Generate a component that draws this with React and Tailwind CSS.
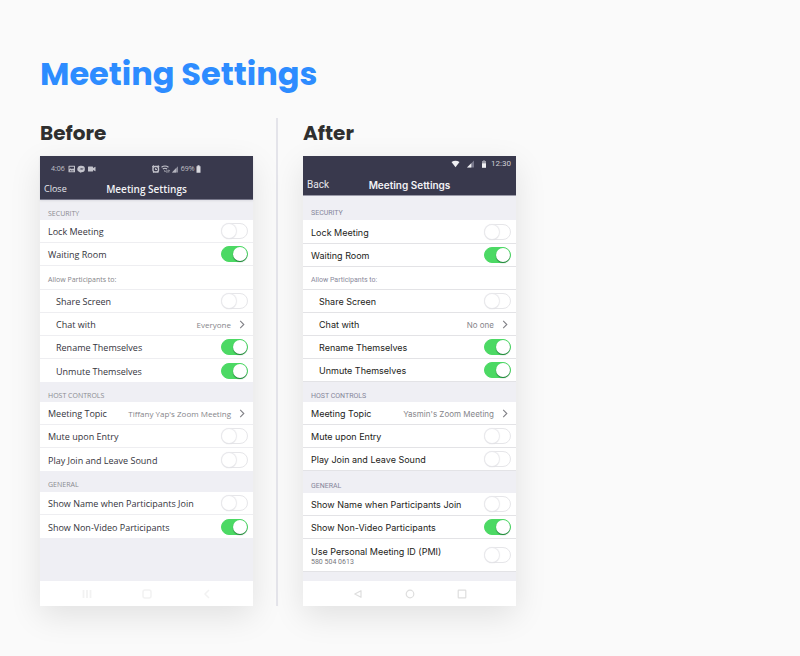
import React from "react";

const beforeSections = [
  {
    title: "Security",
    head: "h-[20px] pt-[7px]",
    rows: [
      { type: "toggle", label: "Lock Meeting", on: false },
      { type: "toggle", label: "Waiting Room", on: true },
      { type: "note", label: "Allow Participants to:", size: "h-[24px] pt-1" },
      { type: "toggle", label: "Share Screen", on: false, nested: true },
      { type: "link", label: "Chat with", value: "Everyone", nested: true },
      { type: "toggle", label: "Rename Themselves", on: true, nested: true },
      { type: "toggle", label: "Unmute Themselves", on: true, nested: true },
    ],
  },
  {
    title: "Host controls",
    head: "h-[20px] pt-[7px]",
    rows: [
      { type: "link", label: "Meeting Topic", value: "Tiffany Yap's Zoom Meeting" },
      { type: "toggle", label: "Mute upon Entry", on: false },
      { type: "toggle", label: "Play Join and Leave Sound", on: false },
    ],
  },
  {
    title: "General",
    head: "h-[21px] pt-[7px]",
    rows: [
      { type: "toggle", label: "Show Name when Participants Join", on: false },
      { type: "toggle", label: "Show Non-Video Participants", on: true },
    ],
  },
];

const afterSections = [
  {
    title: "Security",
    head: "h-[24px] pt-[10px]",
    rows: [
      { type: "toggle", label: "Lock Meeting", on: false, size: "h-[24px]" },
      { type: "toggle", label: "Waiting Room", on: true },
      { type: "note", label: "Allow Participants to:", size: "h-[23px] pt-1" },
      { type: "toggle", label: "Share Screen", on: false, nested: true },
      { type: "link", label: "Chat with", value: "No one", nested: true },
      { type: "toggle", label: "Rename Themselves", on: true, nested: true },
      { type: "toggle", label: "Unmute Themselves", on: true, nested: true },
    ],
  },
  {
    title: "Host controls",
    head: "h-[20px] pt-[7px]",
    rows: [
      { type: "link", label: "Meeting Topic", value: "Yasmin's Zoom Meeting" },
      { type: "toggle", label: "Mute upon Entry", on: false },
      { type: "toggle", label: "Play Join and Leave Sound", on: false },
    ],
  },
  {
    title: "General",
    head: "h-[22px] pt-[7px]",
    rows: [
      { type: "toggle", label: "Show Name when Participants Join", on: false },
      { type: "toggle", label: "Show Non-Video Participants", on: true },
      { type: "toggle", label: "Use Personal Meeting ID (PMI)", detail: "580 504 0613", on: false, size: "h-[33px]" },
    ],
  },
];

const beforeTheme = {
  id: "before",
  text: "text-[9px] text-[#34343c]",
  line: "border-[#eeeef1]",
  value: "text-[8px] text-[#85858a]",
  muted: "text-[#8a8a90]",
  note: "text-[#85858a]",
};

const afterTheme = {
  id: "after",
  text: "font-[Inter,Roboto,sans-serif] text-[9px] text-[#1c1c20]",
  line: "border-[#e3e3e6]",
  value: "text-[8px] text-[#85858a]",
  muted: "text-[#85859a]",
  note: "text-[#8a8a9c]",
};

function Toggle({ id, on }) {
  return (
    <input
      id={id}
      type="checkbox"
      role="switch"
      defaultChecked={on}
      className="flex h-[16px] w-[27px] shrink-0 appearance-none items-center rounded-full border border-[#e6e6e9] bg-white before:block before:h-[14px] before:w-[14px] before:rounded-full before:bg-white before:shadow-[0_0_1px_1px_#e9e9ec,0_1px_1px_#cfcfd4] before:content-[''] checked:justify-end checked:border-[#4cd964] checked:bg-[#4cd964] checked:before:shadow-[0_1px_1px_#1f7a38]"
    />
  );
}

function Row({ row, theme, last }) {
  const indent = row.nested ? "pl-4" : "pl-2";
  const border = last ? "" : `border-b ${theme.line}`;
  if (row.type === "note") {
    return (
      <p className={`flex items-center bg-white pl-2 text-[7px] leading-[10px] ${row.size} ${border} ${theme.note}`}>
        {row.label}
      </p>
    );
  }
  if (row.type === "link") {
    return (
      <button
        type="button"
        className={`flex h-[23px] w-full items-center bg-white pr-2 text-left leading-[12px] ${indent} ${border} ${theme.text}`}
      >
        <span className="flex-1 pt-[2px]">{row.label}</span>
        <span className={`mr-2 pt-[2px] ${theme.value}`}>{row.value}</span>
        <svg viewBox="0 0 6 10" className="h-[9px] w-[6px]" fill="none" stroke="#808086" strokeWidth="1.2">
          <path d="M1 1l4 4-4 4" />
        </svg>
      </button>
    );
  }
  const id = `${theme.id}-${row.label.toLowerCase().replace(/[^a-z]+/g, "-")}`;
  return (
    <div className={`flex items-center justify-between bg-white pr-[5px] leading-[12px] ${row.size || "h-[23px]"} ${indent} ${border} ${theme.text}`}>
      <label htmlFor={id} className="pt-[2px]">
        {row.label}
        {row.detail && <span className="block font-[Roboto,sans-serif] text-[7px] leading-[9px] text-[#77777d]">{row.detail}</span>}
      </label>
      <Toggle id={id} on={row.on} />
    </div>
  );
}

function Sections({ sections, theme }) {
  return sections.map((s) => (
    <section key={s.title}>
      <h3 className={`flex items-center pl-2 text-[7px] leading-[10px] uppercase ${s.head} ${theme.muted}`}>{s.title}</h3>
      {s.rows.map((row, i) => (
        <Row key={row.label} row={row} theme={theme} last={i === s.rows.length - 1 && theme.id === "before"} />
      ))}
    </section>
  ));
}

function TitleBar({ action, size, heading }) {
  return (
    <div className={`grid h-[20px] grid-cols-[1fr_auto_1fr] items-center px-1 leading-[14px] ${size}`}>
      <button type="button" className="justify-self-start text-[#e6e6ec]">
        {action}
      </button>
      <h2 className={`text-[10px] text-[#f2f2f5] ${heading}`}>Meeting Settings</h2>
    </div>
  );
}

function BeforePhone() {
  return (
    <div className="flex flex-1 flex-col bg-[#efeff4] font-['Open_Sans',sans-serif] shadow-[0_10px_30px_rgba(0,0,0,0.1)]">
      <header className="border-b border-[#77778a] bg-[#39394d] shadow-[0_1px_2px_#dcdce2]">
        <div className="flex h-[23px] items-center pt-[3px] pl-[11px] text-[7px] leading-[10px] text-[#c4c4cc]">
          <span>4:06</span>
          <svg viewBox="0 0 28 8" className="ml-[3px] h-[8px] w-[28px]" fill="#c4c4cc">
            <path fillRule="evenodd" d="M1 .8h5.500q.5 0 .5.5v5.400q0 .5-.5.5H1q-.5 0-.5-.5V1.300q0-.5.5-.5zM1.500 1.800v2.400l1.300-1 1.200 1 1-1 1 .8V1.800zM1.500 6.200h4.300L5 5.100l-1 .9-1.300-1z" />
            <path fillRule="evenodd" d="M13.500 .8a3.400 3.200 0 0 1 0 6.400l-1 .6-1-.9A3.400 3.200 0 0 1 13.500 .8zM11.500 4.900l1.500-.8 1 .8 1.700-1.800-1.700.7-1-.7z" />
            <path d="M20.500 1.600h4q.5 0 .5.500v.9l2.500-1.300v4.600l-2.500-1.300v.9q0 .5-.5.5h-4q-.5 0-.5-.5V2.100q0-.5.5-.5z" />
          </svg>
          <svg viewBox="0 0 28 8" className="ml-[56px] h-[8px] w-[28px]" fill="none" stroke="#c4c4cc">
            <rect x="1" y="1.500" width="5.500" height="5.500" rx="2" strokeWidth="1.400" />
            <path d="M.3 2L1.800.5M7.200 2L5.700.5M3.700 3v1.500h1.300M1.200 7.600l.7-.9M6.300 7.600l-.7-.9" strokeWidth="1.100" />
            <path d="M9.500 2.300q3.500-2.600 7 0M10.800 4q2.200-1.600 4.200 0M12.200 5.600l1.300.9" strokeWidth="1.100" />
            <path d="M15 4.800v2.700M14.200 6.700l.8.9M16.800 7.500V4.800M17.600 5.800l-.8-.9" strokeWidth=".7" />
            <path d="M26 1.200v6.300h-6z" fill="#8d8d9b" stroke="none" />
            <path d="M24 3.300v4.200h-4z" fill="#b4b4be" stroke="none" />
          </svg>
          <span className="mx-px">69%</span>
          <svg viewBox="0 0 5 8" className="h-[8px] w-[5px]" fill="#d8d8de">
            <path d="M1.500.3h2v1h1v6.400h-4V1.300h1z" />
          </svg>
        </div>
        <TitleBar action="Close" size="text-[9px]" heading="font-semibold" />
      </header>
      <Sections sections={beforeSections} theme={beforeTheme} />
      <nav className="mt-auto flex h-[25px] items-center justify-center gap-[50px] bg-white text-[#f2f2f2]">
        <button type="button" aria-label="Recent apps">
          <svg viewBox="0 0 10 10" className="h-[10px] w-[10px]" fill="none" stroke="currentColor" strokeWidth="1.800">
            <path d="M1.500 1v8M5 1v8M8.500 1v8" />
          </svg>
        </button>
        <button type="button" aria-label="Home">
          <svg viewBox="0 0 10 10" className="h-[10px] w-[10px]" fill="none" stroke="currentColor" strokeWidth="1.500">
            <rect x="1" y="1" width="8" height="8" rx="2" />
          </svg>
        </button>
        <button type="button" aria-label="Go back">
          <svg viewBox="0 0 10 10" className="h-[10px] w-[10px]" fill="none" stroke="currentColor" strokeWidth="1.500">
            <path d="M7 1L3 5l4 4" />
          </svg>
        </button>
      </nav>
    </div>
  );
}

function AfterPhone() {
  return (
    <div className="flex flex-1 flex-col bg-[#efeff4] font-[Roboto,sans-serif] shadow-[0_10px_30px_rgba(0,0,0,0.1)]">
      <header className="border-b border-[#9a9aa8] bg-[#39394d]">
        <div className="flex h-[19px] items-center justify-end pr-[5px] pb-[3px] text-[8px] leading-[10px] text-[#d0d0d6]">
          <svg viewBox="0 0 36 8" className="mr-1 h-[8px] w-[36px]" fill="#efeff2">
            <path d="M.5 2q4-2.500 8 0l-4 5.300z" />
            <path d="M23 .6v6.800h-7z" fill="#77778a" />
            <path d="M20.300 3.200v4.200H16z" />
            <path d="M31 1h1.200V.2h1.600V1H35v2.200h-4z" fill="#9a9aa6" />
            <path d="M31 3.200h4v4.600h-4z" />
          </svg>
          <span>12:30</span>
        </div>
        <TitleBar action="Back" size="text-[10px]" heading="font-[Inter,Roboto,sans-serif] font-semibold" />
      </header>
      <Sections sections={afterSections} theme={afterTheme} />
      <nav className="mt-[9px] flex h-[25px] items-center justify-center gap-[42px] bg-white text-[#dedede]">
        <button type="button" aria-label="Go back">
          <svg viewBox="0 0 10 10" className="h-[10px] w-[10px]" fill="none" stroke="currentColor" strokeWidth="1.200" strokeLinejoin="round">
            <path d="M8 1.700v6.600L1.800 5z" />
          </svg>
        </button>
        <button type="button" aria-label="Home">
          <svg viewBox="0 0 10 10" className="h-[10px] w-[10px]" fill="none" stroke="currentColor" strokeWidth="1.200">
            <circle cx="5" cy="5" r="3.800" />
          </svg>
        </button>
        <button type="button" aria-label="Recent apps">
          <svg viewBox="0 0 10 10" className="h-[10px] w-[10px]" fill="none" stroke="currentColor" strokeWidth="1.200">
            <rect x="1.200" y="1.200" width="7.600" height="7.600" rx=".6" />
          </svg>
        </button>
      </nav>
    </div>
  );
}

function Column({ title, children }) {
  return (
    <section className="flex w-[213px] flex-col">
      <h2 className="mb-2 font-[Poppins,Inter,sans-serif] text-[20px] leading-[30px] font-bold text-[#2f2f2f]">{title}</h2>
      {children}
    </section>
  );
}

export default function App() {
  return (
    <main className="min-h-screen bg-[#fafafa] px-10 pt-[50px] pb-[50px]">
      <h1 className="mb-5 font-[Poppins,Inter,sans-serif] text-[32px] leading-[48px] font-bold text-[#2d8cff]">Meeting Settings</h1>
      <div className="flex">
        <Column title="Before">
          <BeforePhone />
        </Column>
        <div className="mr-[25px] ml-[23px] w-[2px] bg-[#e4e4ea]" />
        <Column title="After">
          <AfterPhone />
        </Column>
      </div>
    </main>
  );
}
